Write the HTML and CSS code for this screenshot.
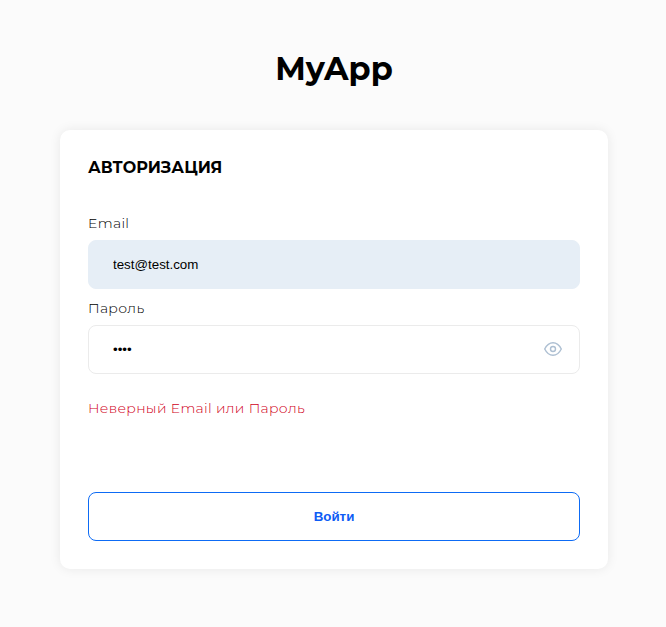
FILE: index.html
```html
<!DOCTYPE html>
<html lang="ru">
<head>
<meta charset="utf-8">
<title>MyApp</title>
<link rel="stylesheet" href="styles.css">
</head>
<body>
<main class="page">
  <h1 class="brand">MyApp</h1>
  <form class="card">
    <h2 class="title">АВТОРИЗАЦИЯ</h2>
    <label class="label label-email" for="email">Email</label>
    <input class="field field-filled" id="email" type="text" value="test@test.com">
    <label class="label label-password" for="password">Пароль</label>
    <div class="password">
      <input class="field" id="password" type="password" value="test">
      <svg class="eye" width="20" height="16" viewBox="0 0 20 16" fill="none" stroke="#adbfd2" stroke-width="1.4">
        <path d="M1.7 8C3.6 4.200 6.500 1.700 10 1.700S16.400 4.200 18.300 8C16.400 11.800 13.500 14.300 10 14.300S3.600 11.800 1.700 8Z" stroke-linejoin="round"/>
        <circle cx="10" cy="8" r="2.500"/>
      </svg>
    </div>
    <p class="error">Неверный Email или Пароль</p>
    <button class="submit" type="button">Войти</button>
  </form>
</main>
</body>
</html>
```
FILE: styles.css
```css
* {
  box-sizing: border-box;
}

body {
  margin: 0;
  min-height: 100vh;
  background: #fbfbfb;
  color: #000;
  font-family: Montserrat, Inter, "Liberation Sans", sans-serif;
}

.page {
  width: 548px;
  min-height: 100vh;
  margin-left: 60px;
  padding-top: 50px;
}

.brand {
  margin: 0 0 42px;
  font-size: 32px;
  line-height: 38px;
  font-weight: 700;
  text-align: center;
}

.card {
  display: flex;
  flex-direction: column;
  height: 439px;
  padding: 28px;
  border-radius: 10px;
  background: #fff;
  box-shadow: 0 0 12px rgba(0, 0, 0, 0.08);
}

.title {
  margin: 0;
  font-size: 16px;
  line-height: 20px;
  font-weight: 700;
  letter-spacing: 0.05px;
}

.label {
  height: 18px;
  font-size: 14px;
  line-height: 18px;
  font-weight: 300;
  letter-spacing: 0.32px;
  color: #000;
}

.label-email {
  margin: 36px 0 8px;
}

.label-password {
  margin: 10px 0 8px;
}

.field {
  display: block;
  width: 100%;
  height: 49px;
  padding: 0 24px;
  border: 1px solid #ebebeb;
  border-radius: 8px;
  background: #fff;
  color: #000;
  font: 13.333px "Liberation Sans", sans-serif;
}

.field-filled {
  border-color: #e6eef6;
  background: #e6eef6;
}

.password {
  position: relative;
}

.eye {
  position: absolute;
  top: 16px;
  right: 17px;
}

.error {
  margin: 25px 0 0;
  font-size: 14px;
  line-height: 18px;
  font-weight: 300;
  letter-spacing: 0.32px;
  color: #d0001a;
}

.submit {
  height: 49px;
  margin-top: auto;
  padding: 0;
  border: 1px solid #0d6bf5;
  border-radius: 8px;
  background: #fff;
  color: #0d5cf5;
  font: bold 13.333px "Liberation Sans", sans-serif;
}
```
